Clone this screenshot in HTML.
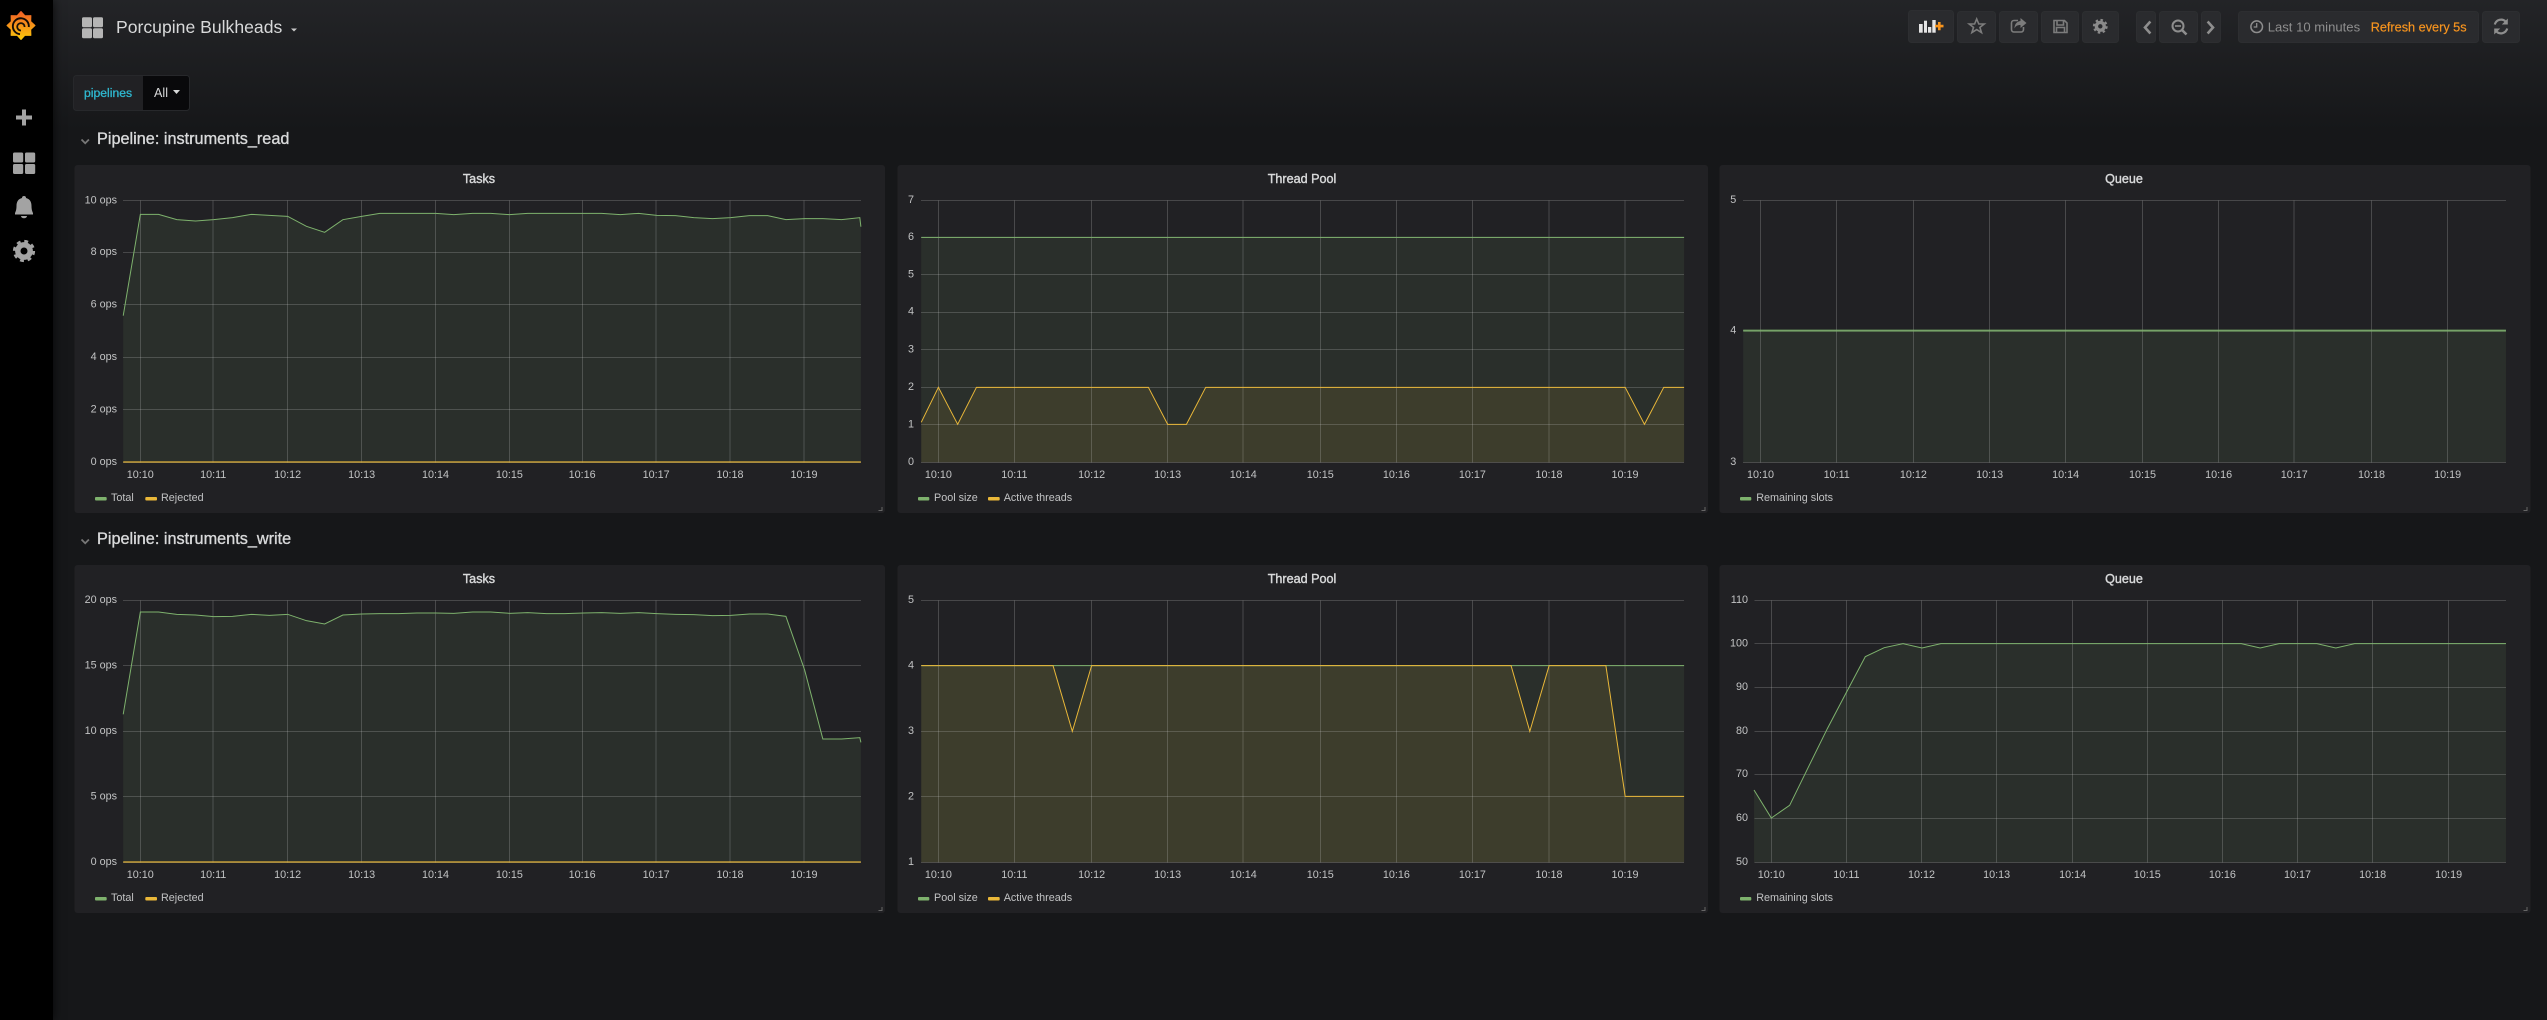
<!DOCTYPE html>
<html><head><meta charset="utf-8"><title>Porcupine Bulkheads</title>
<style>
html,body{margin:0;padding:0;width:2547px;height:1020px;overflow:hidden;background:#161719}
#bg{position:absolute;left:0;top:0;width:2547px;height:130px;background:linear-gradient(#232427,#161719)}
#side{position:absolute;left:0;top:0;width:53px;height:1020px;background:#000;box-shadow:0 0 10px rgba(0,0,0,.75)}
svg{position:absolute;left:0;top:0}
text{font-family:"Liberation Sans",sans-serif}
.t{font-size:10.8px;fill:#c2c3c4}
.e{text-anchor:end;transform:translateY(-.5px)}
.m{text-anchor:middle}
.pt{font-size:12.6px;fill:#d8d9da;stroke:#d8d9da;stroke-width:.4px;text-anchor:middle}
.rt{font-size:16.25px;fill:#d8d9da;stroke:#d8d9da;stroke-width:.35px}
.p{fill:#212124}
.b{fill:#2a2b2e;stroke:#2d2e31}
.h{fill:none;stroke:#c8c8c8;stroke-opacity:.23;stroke-width:1;shape-rendering:crispEdges;vector-effect:non-scaling-stroke}
.v{fill:none;stroke:#c8c8c8;stroke-opacity:.24;stroke-width:1;shape-rendering:crispEdges;vector-effect:non-scaling-stroke}
.ga{fill:#7eb26d;fill-opacity:.1;stroke:none}
.ya{fill:#eab839;fill-opacity:.1;stroke:none}
.gl{fill:none;stroke:#7eb26d;stroke-width:1;vector-effect:non-scaling-stroke}
.yl{fill:none;stroke:#eab839;stroke-width:1;vector-effect:non-scaling-stroke}
.yb{fill:none;stroke:#eab839;stroke-opacity:.6;stroke-width:2;vector-effect:non-scaling-stroke}
.gs{fill:#7eb26d}.ys{fill:#eab839}
.ic{fill:none;stroke:#7c7c7c;stroke-width:1.6}
.ig{fill:none;stroke:#8e8e8e;stroke-width:2.6;stroke-linecap:square}
.hd{fill:none;stroke:#666;stroke-width:1}
</style></head>
<body>
<div id="bg"></div>
<div id="side"></div>
<svg width="2547" height="1020" viewBox="0 0 2547 1020" xmlns="http://www.w3.org/2000/svg">
<defs><linearGradient id="lg" gradientUnits="userSpaceOnUse" x1="0" y1="10" x2="0" y2="40"><stop offset="0" stop-color="#f05a28"/><stop offset="1" stop-color="#fbca0a"/></linearGradient></defs>

<!-- logo -->
<polygon points="35,25.500 30.700,29.500 30.900,35.400 25,35.200 21,39.500 17,35.200 11.100,35.400 11.300,29.500 7,25.500 11.300,21.500 11.100,15.600 17,15.800 21,11.500 25,15.800 30.900,15.600 30.700,21.500" fill="url(#lg)" stroke="url(#lg)" stroke-width="1" stroke-linejoin="round"/>
<circle cx="21" cy="26" r="10.500" fill="url(#lg)"/>
<path d="M20 34.200A8 8 0 1 1 28.800 27" fill="none" stroke="#140b05" stroke-width="1.900"/>
<path d="M24.600 27A3.700 3.700 0 1 0 21 30.500" fill="none" stroke="#1a1208" stroke-width="1.800"/>

<!-- side icons -->
<path d="M22 109.500h4v6h6v4h-6v6h-4v-6h-6v-4h6z" fill="#a3a3a3"/>
<g fill="#a3a3a3"><rect x="13" y="152.500" width="10.200" height="10" rx="1.500"/><rect x="25" y="152.500" width="10.200" height="10" rx="1.500"/><rect x="13" y="164" width="10.200" height="10" rx="1.500"/><rect x="25" y="164" width="10.200" height="10" rx="1.500"/></g>
<path d="M24 196a2 2 0 0 1 2 2c4 1 5.500 4 5.500 8 0 4 1 6 1.500 7v1.500H15V213c.5-1 1.500-3 1.500-7 0-4 1.500-7 5.500-8a2 2 0 0 1 2-2zM21 216h6a3 2.300 0 0 1-6 0z" fill="#a3a3a3"/>
<circle cx="24" cy="251" r="6.200" fill="none" stroke="#a3a3a3" stroke-width="5.400"/>
<circle cx="24" cy="251" r="9.600" fill="none" stroke="#a3a3a3" stroke-width="3" stroke-dasharray="3.800 3.740"/>

<!-- header -->
<g fill="#b5b5b5"><rect x="82" y="17.300" width="10" height="10" rx="1.500"/><rect x="93" y="17.300" width="10" height="10" rx="1.500"/><rect x="82" y="28.300" width="10" height="10" rx="1.500"/><rect x="93" y="28.300" width="10" height="10" rx="1.500"/></g>
<text x="116" y="33" font-size="17.600" fill="#d8d9da">Porcupine Bulkheads</text>
<path d="M291 28.500h6l-3 3z" fill="#c8c8c8"/>

<!-- toolbar -->
<rect class="b" x="1908.500" y="10.500" width="45" height="32" rx="3"/>
<rect class="b" x="1957.500" y="11.500" width="38" height="31" rx="3"/>
<rect class="b" x="1999.500" y="11.500" width="38" height="31" rx="3"/>
<rect class="b" x="2041.500" y="11.500" width="37" height="31" rx="3"/>
<rect class="b" x="2082.500" y="11.500" width="36" height="31" rx="3"/>
<rect class="b" x="2136.500" y="11.500" width="19" height="31" rx="3"/>
<rect class="b" x="2159.500" y="11.500" width="38" height="31" rx="3"/>
<rect class="b" x="2201.500" y="11.500" width="19" height="31" rx="3"/>
<rect class="b" x="2238.500" y="11.500" width="240" height="31" rx="3"/>
<rect class="b" x="2482.500" y="11.500" width="37" height="31" rx="3"/>
<g fill="#e4e4e4"><rect x="1919" y="24" width="3.700" height="8.700"/><rect x="1924" y="20.700" width="3" height="12"/><rect x="1928" y="27" width="3.300" height="5.700"/><rect x="1932.300" y="20" width="3.400" height="12.700"/></g>
<path d="M1938 22h2.600v2.800h2.900v2.600h-2.900v2.900H1938v-2.900h-2.900v-2.600h2.900z" fill="#f7941d"/>
<path class="ic" d="M1976.700 19l2.100 5h5.400l-4.300 3.400 1.600 5.200-4.800-3-4.800 3 1.600-5.200-4.300-3.400h5.400z"/>
<path class="ic" d="M2018 20.500h-4a2.500 2.500 0 0 0-2.500 2.500v6.500a2.500 2.500 0 0 0 2.500 2.500h7a2.500 2.500 0 0 0 2.500-2.500v-2.500"/>
<path d="M2020.500 18l6 5-6 5v-3c-3.500 0-5 1.200-6 3.500 0-4.500 2.500-7 6-7.500z" fill="#7c7c7c"/>
<path class="ic" d="M2054 20.500h10.500l2.500 2.500v9.500h-13zM2057 20.500v4.500h6.500v-4.500M2056.500 32.500v-5h8v5"/>
<circle cx="2100.300" cy="26.300" r="3.900" fill="none" stroke="#8a8a8a" stroke-width="3.400"/>
<circle cx="2100.300" cy="26.300" r="6.300" fill="none" stroke="#8a8a8a" stroke-width="2.200" stroke-dasharray="2.500 2.440"/>
<path class="ig" d="M2149.500 22.500l-4.500 5 4.500 5M2208.500 22.500l4.500 5-4.500 5"/>
<circle cx="2178" cy="26" r="5.500" fill="none" stroke="#8e8e8e" stroke-width="2"/>
<path d="M2182 30l4.500 4.500" stroke="#8e8e8e" stroke-width="2.600" fill="none"/>
<path d="M2175 26h6" stroke="#8e8e8e" stroke-width="1.600" fill="none"/>
<circle cx="2256.700" cy="26.700" r="5.800" fill="none" stroke="#8e8e8e" stroke-width="1.500"/>
<path d="M2256.700 23v4h-3" fill="none" stroke="#8e8e8e" stroke-width="1.300"/>
<text x="2267.700" y="31.500" font-size="13.100" fill="#8e8e8e">Last 10 minutes</text>
<text x="2370.700" y="31.500" font-size="12.700" fill="#f5931f" stroke="#f5931f" stroke-width=".2">Refresh every 5s</text>
<path d="M2494.800 24.500a6.500 6.500 0 0 1 11-2.800M2507.200 28.500a6.500 6.500 0 0 1-11 2.800" fill="none" stroke="#8e8e8e" stroke-width="2.200"/>
<path d="M2507.800 18.500v6h-6zM2494.200 34.500v-6h6z" fill="#8e8e8e"/>

<!-- variable -->
<rect x="73.500" y="75.500" width="116" height="35" rx="3" fill="#212124" stroke="#27282b"/>
<path d="M143 76h43.500a2.500 2.500 0 0 1 2.500 2.500v29a2.500 2.500 0 0 1-2.500 2.500H143z" fill="#09090b"/>
<text x="84" y="97" font-size="12.200" fill="#2fb8d0" stroke="#2fb8d0" stroke-width=".3">pipelines</text>
<text x="154" y="97" font-size="12.600" fill="#d8d9da">All</text>
<path d="M173 90h7l-3.500 4z" fill="#d8d9da"/>

<!-- row titles -->
<path d="M81.500 139.500l3.700 3.700 3.700-3.700M81.500 539.500l3.700 3.700 3.700-3.700" fill="none" stroke="#777" stroke-width="1.800"/>
<text class="rt" x="97" y="144">Pipeline: instruments_read</text>
<text class="rt" x="97" y="544">Pipeline: instruments_write</text>

<!-- panels -->
<rect class="p" x="74.500" y="165" width="810.500" height="348" rx="3"/>
<rect class="p" x="897.500" y="165" width="810.500" height="348" rx="3"/>
<rect class="p" x="1719.500" y="165" width="811" height="348" rx="3"/>
<rect class="p" x="74.500" y="565" width="810.500" height="348" rx="3"/>
<rect class="p" x="897.500" y="565" width="810.500" height="348" rx="3"/>
<rect class="p" x="1719.500" y="565" width="811" height="348" rx="3"/>
<path class="hd" d="M882 507v3.500h-3.500M1705 507v3.500h-3.500M2527 507v3.500h-3.500M882 907v3.500h-3.500M1705 907v3.500h-3.500M2527 907v3.500h-3.500"/>

<text class="pt" x="479" y="183">Tasks</text><text class="pt" x="1302" y="183">Thread Pool</text><text class="pt" x="2124" y="183">Queue</text>
<text class="pt" x="479" y="583">Tasks</text><text class="pt" x="1302" y="583">Thread Pool</text><text class="pt" x="2124" y="583">Queue</text>

<!-- R1 P1 -->
<g transform="translate(60,150) scale(.53571,.33333)">
<polygon class="ga" points="118,497 150,193 184,193 218,209 253,213 287,209 322,203 357,193 391,196 425,199 460,229 494,247 528,209 563,199 597,190 632,190 666,190 701,190 735,194 770,190 804,190 839,194 873,190 908,190 942,190 977,190 1011,190 1046,194 1080,190 1114,196 1149,197 1183,203 1218,206 1252,203 1287,197 1321,197 1355,209 1390,206 1424,206 1459,209 1493,203 1495,230 1495,937 118,937"/>
<path class="h" d="M118 151H1495M118 307H1495M118 463H1495M118 622H1495M118 778H1495M118 937H1495"/>
<path class="v" d="M150 151V937M286 151V937M425 151V937M563 151V937M701 151V937M839 151V937M975 151V937M1113 151V937M1251 151V937M1389 151V937"/>
<polyline class="gl" points="118,497 150,193 184,193 218,209 253,213 287,209 322,203 357,193 391,196 425,199 460,229 494,247 528,209 563,199 597,190 632,190 666,190 701,190 735,194 770,190 804,190 839,194 873,190 908,190 942,190 977,190 1011,190 1046,194 1080,190 1114,196 1149,197 1183,203 1218,206 1252,203 1287,197 1321,197 1355,209 1390,206 1424,206 1459,209 1493,203 1495,230"/>
<path class="yb" d="M118 936H1495"/>
</g>
<g class="t">
<text class="t e" x="117" y="204">10 ops</text><text class="t e" x="117" y="255.500">8 ops</text><text class="t e" x="117" y="308">6 ops</text><text class="t e" x="117" y="360.500">4 ops</text><text class="t e" x="117" y="413">2 ops</text><text class="t e" x="117" y="465.500">0 ops</text>
<text class="t m" x="140.300" y="478">10:10</text><text class="t m" x="213.200" y="478">10:11</text><text class="t m" x="287.600" y="478">10:12</text><text class="t m" x="361.600" y="478">10:13</text><text class="t m" x="435.500" y="478">10:14</text><text class="t m" x="509.400" y="478">10:15</text><text class="t m" x="582.200" y="478">10:16</text><text class="t m" x="656.200" y="478">10:17</text><text class="t m" x="730" y="478">10:18</text><text class="t m" x="804" y="478">10:19</text>
</g>
<rect class="gs" x="95" y="497" width="11.700" height="3.500" rx="1"/><text class="t" x="111" y="501">Total</text>
<rect class="ys" x="145.300" y="497" width="11.700" height="3.500" rx="1"/><text class="t" x="161" y="501">Rejected</text>

<!-- R1 P2 -->
<g transform="translate(880,150) scale(.53571,.33333)">
<polygon class="ga" points="77,262 1501,262 1501,937 77,937"/>
<polygon class="ya" points="77,817 109,712 145,823 180,712 501,712 537,823 572,823 608,712 1391,712 1427,823 1463,712 1501,712 1501,937 77,937"/>
<path class="h" d="M77 151H1501M77 262H1501M77 373H1501M77 487H1501M77 598H1501M77 712H1501M77 823H1501M77 937H1501"/>
<path class="v" d="M109 151V937M251 151V937M395 151V937M537 151V937M678 151V937M822 151V937M964 151V937M1106 151V937M1249 151V937M1391 151V937"/>
<polyline class="gl" points="77,262 1501,262"/>
<polyline class="yl" points="77,817 109,712 145,823 180,712 501,712 537,823 572,823 608,712 1391,712 1427,823 1463,712 1501,712"/>
</g>
<text class="t e" x="914" y="203.500">7</text><text class="t e" x="914" y="240.500">6</text><text class="t e" x="914" y="278">5</text><text class="t e" x="914" y="315">4</text><text class="t e" x="914" y="353">3</text><text class="t e" x="914" y="390.500">2</text><text class="t e" x="914" y="428">1</text><text class="t e" x="914" y="465.500">0</text>
<text class="t m" x="938.400" y="478">10:10</text><text class="t m" x="1014.400" y="478">10:11</text><text class="t m" x="1091.600" y="478">10:12</text><text class="t m" x="1167.600" y="478">10:13</text><text class="t m" x="1243.300" y="478">10:14</text><text class="t m" x="1320.300" y="478">10:15</text><text class="t m" x="1396.400" y="478">10:16</text><text class="t m" x="1472.400" y="478">10:17</text><text class="t m" x="1549" y="478">10:18</text><text class="t m" x="1625" y="478">10:19</text>
<rect class="gs" x="918" y="497" width="11.300" height="3.500" rx="1"/><text class="t" x="934" y="501">Pool size</text>
<rect class="ys" x="988" y="497" width="11.700" height="3.500" rx="1"/><text class="t" x="1003.700" y="501">Active threads</text>

<!-- R1 P3 -->
<g transform="translate(1700,150) scale(.54018,.33333)">
<polygon class="ga" points="80,542 1492,542 1492,937 80,937"/>
<path class="h" d="M80 151H1492M80 542H1492M80 937H1492"/>
<path class="v" d="M112 151V937M253 151V937M395 151V937M536 151V937M677 151V937M819 151V937M960 151V937M1100 151V937M1243 151V937M1384 151V937"/>
<path class="yb" style="stroke:#7eb26d;stroke-opacity:.85" d="M80 542H1492"/>
</g>
<text class="t e" x="1736.300" y="203.500">5</text><text class="t e" x="1736.300" y="334">4</text><text class="t e" x="1736.300" y="465.500">3</text>
<text class="t m" x="1760.500" y="478">10:10</text><text class="t m" x="1836.700" y="478">10:11</text><text class="t m" x="1913.400" y="478">10:12</text><text class="t m" x="1989.600" y="478">10:13</text><text class="t m" x="2065.700" y="478">10:14</text><text class="t m" x="2142.500" y="478">10:15</text><text class="t m" x="2218.600" y="478">10:16</text><text class="t m" x="2294.300" y="478">10:17</text><text class="t m" x="2371.500" y="478">10:18</text><text class="t m" x="2447.700" y="478">10:19</text>
<rect class="gs" x="1740" y="497" width="11.300" height="3.500" rx="1"/><text class="t" x="1756.200" y="501">Remaining slots</text>

<!-- R2 P1 -->
<g transform="translate(60,520) scale(.53571,.33333)">
<polygon class="ga" points="118,583 150,276 184,276 218,283 253,285 287,290 322,289 357,283 391,286 425,283 460,302 494,312 528,285 563,282 597,281 632,281 666,279 701,279 735,280 770,276 804,276 839,280 873,278 908,281 942,281 977,279 1011,278 1046,280 1080,278 1114,281 1149,283 1183,284 1218,287 1252,286 1287,282 1321,282 1355,289 1390,450 1424,657 1459,657 1493,653 1495,667 1495,1027 118,1027"/>
<path class="h" d="M118 241H1495M118 437H1495M118 634H1495M118 829H1495M118 1027H1495"/>
<path class="v" d="M150 241V1027M286 241V1027M425 241V1027M563 241V1027M701 241V1027M839 241V1027M975 241V1027M1113 241V1027M1251 241V1027M1389 241V1027"/>
<polyline class="gl" points="118,583 150,276 184,276 218,283 253,285 287,290 322,289 357,283 391,286 425,283 460,302 494,312 528,285 563,282 597,281 632,281 666,279 701,279 735,280 770,276 804,276 839,280 873,278 908,281 942,281 977,279 1011,278 1046,280 1080,278 1114,281 1149,283 1183,284 1218,287 1252,286 1287,282 1321,282 1355,289 1390,450 1424,657 1459,657 1493,653 1495,667"/>
<path class="yb" d="M118 1026H1495"/>
</g>
<text class="t e" x="117" y="603.500">20 ops</text><text class="t e" x="117" y="669">15 ops</text><text class="t e" x="117" y="734.500">10 ops</text><text class="t e" x="117" y="800">5 ops</text><text class="t e" x="117" y="865.500">0 ops</text>
<text class="t m" x="140.300" y="878">10:10</text><text class="t m" x="213.200" y="878">10:11</text><text class="t m" x="287.600" y="878">10:12</text><text class="t m" x="361.600" y="878">10:13</text><text class="t m" x="435.500" y="878">10:14</text><text class="t m" x="509.400" y="878">10:15</text><text class="t m" x="582.200" y="878">10:16</text><text class="t m" x="656.200" y="878">10:17</text><text class="t m" x="730" y="878">10:18</text><text class="t m" x="804" y="878">10:19</text>
<rect class="gs" x="95" y="897" width="11.700" height="3.500" rx="1"/><text class="t" x="111" y="901">Total</text>
<rect class="ys" x="145.300" y="897" width="11.700" height="3.500" rx="1"/><text class="t" x="161" y="901">Rejected</text>

<!-- R2 P2 -->
<g transform="translate(880,520) scale(.53571,.33333)">
<polygon class="ga" points="77,437 1501,437 1501,1027 77,1027"/>
<polygon class="ya" points="77,437 323,437 359,634 395,437 1178,437 1213,634 1249,437 1355,437 1391,829 1501,829 1501,1027 77,1027"/>
<path class="h" d="M77 241H1501M77 437H1501M77 634H1501M77 829H1501M77 1027H1501"/>
<path class="v" d="M109 241V1027M251 241V1027M395 241V1027M537 241V1027M678 241V1027M822 241V1027M964 241V1027M1106 241V1027M1249 241V1027M1391 241V1027"/>
<polyline class="gl" points="77,437 1501,437"/>
<polyline class="yl" points="77,437 323,437 359,634 395,437 1178,437 1213,634 1249,437 1355,437 1391,829 1501,829"/>
</g>
<text class="t e" x="914" y="603.500">5</text><text class="t e" x="914" y="669">4</text><text class="t e" x="914" y="734.500">3</text><text class="t e" x="914" y="800">2</text><text class="t e" x="914" y="865.500">1</text>
<text class="t m" x="938.400" y="878">10:10</text><text class="t m" x="1014.400" y="878">10:11</text><text class="t m" x="1091.600" y="878">10:12</text><text class="t m" x="1167.600" y="878">10:13</text><text class="t m" x="1243.300" y="878">10:14</text><text class="t m" x="1320.300" y="878">10:15</text><text class="t m" x="1396.400" y="878">10:16</text><text class="t m" x="1472.400" y="878">10:17</text><text class="t m" x="1549" y="878">10:18</text><text class="t m" x="1625" y="878">10:19</text>
<rect class="gs" x="918" y="897" width="11.300" height="3.500" rx="1"/><text class="t" x="934" y="901">Pool size</text>
<rect class="ys" x="988" y="897" width="11.700" height="3.500" rx="1"/><text class="t" x="1003.700" y="901">Active threads</text>

<!-- R2 P3 -->
<g transform="translate(1700,520) scale(.54018,.33333)">
<polygon class="ga" points="100,810 132,894 166,856 201,740 236,625 271,517 306,410 341,383 376,371 411,384 446,371 1002,371 1037,384 1072,371 1142,371 1177,384 1212,371 1492,371 1492,1027 100,1027"/>
<path class="h" d="M101 241H1492M101 371H1492M101 502H1492M101 634H1492M101 763H1492M101 895H1492M101 1027H1492"/>
<path class="v" d="M132 241V1027M271 241V1027M410 241V1027M549 241V1027M690 241V1027M828 241V1027M967 241V1027M1106 241V1027M1245 241V1027M1386 241V1027"/>
<polyline class="gl" points="100,810 132,894 166,856 201,740 236,625 271,517 306,410 341,383 376,371 411,384 446,371 1002,371 1037,384 1072,371 1142,371 1177,384 1212,371 1492,371"/>
</g>
<text class="t e" x="1748" y="603.500">110</text><text class="t e" x="1748" y="647">100</text><text class="t e" x="1748" y="690.500">90</text><text class="t e" x="1748" y="734.500">80</text><text class="t e" x="1748" y="777.500">70</text><text class="t e" x="1748" y="821.500">60</text><text class="t e" x="1748" y="865.500">50</text>
<text class="t m" x="1771.300" y="878">10:10</text><text class="t m" x="1846.400" y="878">10:11</text><text class="t m" x="1921.500" y="878">10:12</text><text class="t m" x="1996.600" y="878">10:13</text><text class="t m" x="2072.700" y="878">10:14</text><text class="t m" x="2147.300" y="878">10:15</text><text class="t m" x="2222.400" y="878">10:16</text><text class="t m" x="2297.500" y="878">10:17</text><text class="t m" x="2372.600" y="878">10:18</text><text class="t m" x="2448.700" y="878">10:19</text>
<rect class="gs" x="1740" y="897" width="11.300" height="3.500" rx="1"/><text class="t" x="1756.200" y="901">Remaining slots</text>
</svg>
</body></html>
